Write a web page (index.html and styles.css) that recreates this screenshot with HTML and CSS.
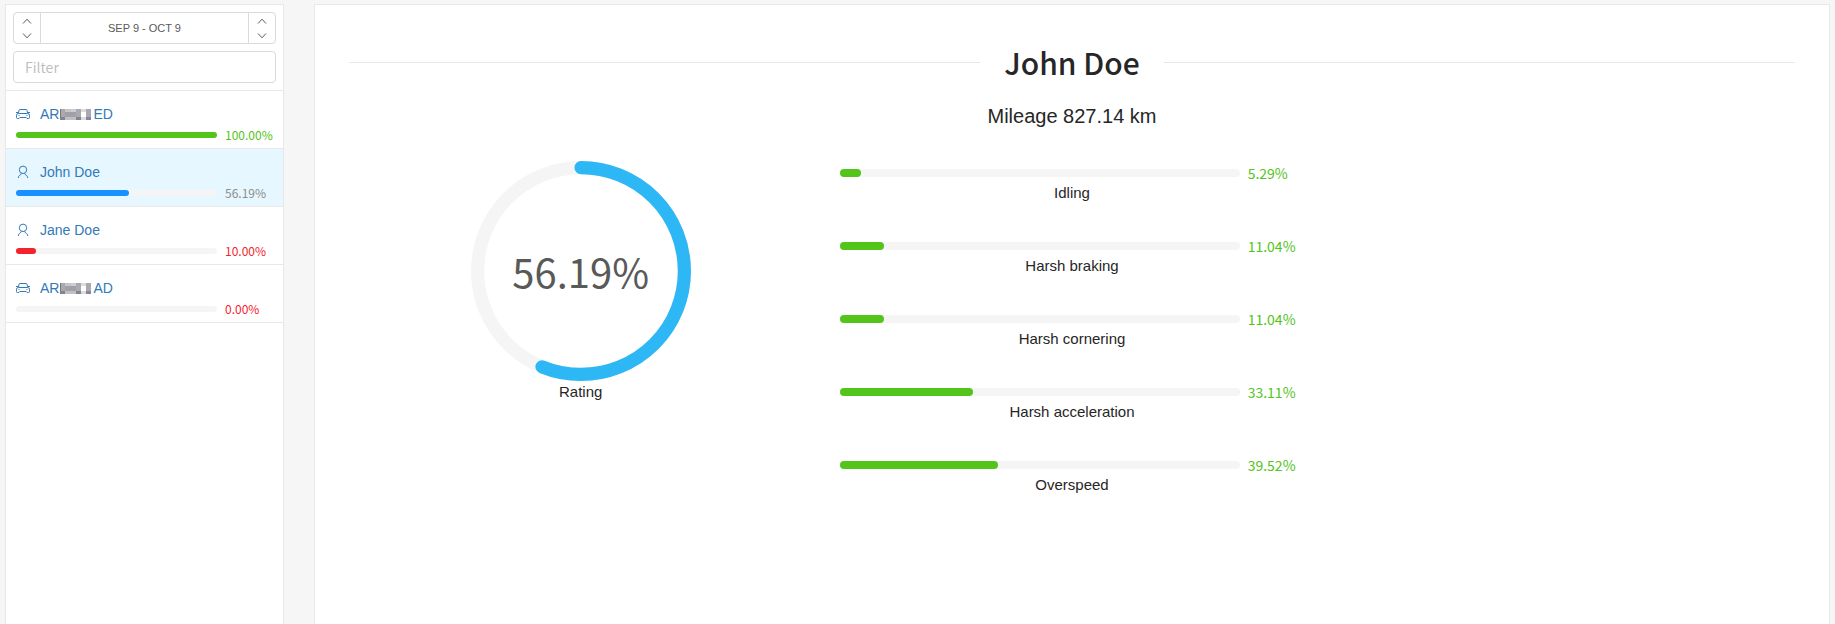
FILE: index.html
```html
<!DOCTYPE html>
<html lang="en">
<head>
<meta charset="utf-8">
<title>Driver rating</title>
<link rel="stylesheet" href="styles.css">
</head>
<body>
<svg class="defs" aria-hidden="true">
  <symbol id="car" viewBox="0 0 14 14">
    <path d="M2.500 6 3 3.200Q3.200 2.500 4 2.500h6q.8 0 1 .7L11.500 6M0 5.500h2M12 5.500h2M2.300 6.500h9.400q1.800 0 1.800 1.800v2.200q0 1-1 1h-1.500l-.8-1H3.800l-.8 1H1.500q-1 0-1-1V8.300Q.5 6.500 2.300 6.500ZM2.500 8.500h1M10.500 8.500h1"/>
  </symbol>
  <symbol id="person" viewBox="0 0 14 14">
    <circle cx="7" cy="4.800" r="3.700"/>
    <path d="M5.500 8.200Q5.300 9.600 3.500 10.400 2.500 11 2.300 13M8.500 8.200q.2 1.400 2 2.200 1 .6 1.200 2.600"/>
  </symbol>
  <symbol id="up" viewBox="0 0 10 6"><path d="M1 5.500 5 1.200 9 5.500"/></symbol>
  <symbol id="down" viewBox="0 0 10 6"><path d="M1 .5 5 4.800 9 .5"/></symbol>
  <symbol id="mosaic" viewBox="0 0 31 11">
    <path fill="#a9a9af" d="M0 0h31v11H0z"/>
    <path fill="#777" d="M0 0h1v11H0z"/>
    <path fill="#ccc4c2" d="M5 0h6v3H5z"/>
    <path fill="#c4d0dc" d="M11 0h5v3h-5z"/>
    <path fill="#a0a0a8" d="M5 3h11v5H5z"/>
    <path fill="#85838b" d="M0 8h5v3H0zM16 8h5v3h-5z"/>
    <path fill="#c0c0c6" d="M5 8h11v3H5z"/>
    <path fill="#dcdcdc" d="M21 0h5v3h-5zM21 8h5v3h-5z"/>
    <path fill="#fff" d="M21 3h5v5h-5z"/>
    <path fill="#8784a6" d="M26 8h5v3h-5z"/>
  </symbol>
</svg>
<div class="layout">
  <aside class="sidebar">
    <div class="tools">
      <div class="period">
        <div class="stepper">
          <button type="button" aria-label="Start later"><svg class="arrow"><use href="#up"/></svg></button>
          <button type="button" aria-label="Start earlier"><svg class="arrow"><use href="#down"/></svg></button>
        </div>
        <button type="button" class="range">SEP 9 - OCT 9</button>
        <div class="stepper">
          <button type="button" aria-label="End later"><svg class="arrow"><use href="#up"/></svg></button>
          <button type="button" aria-label="End earlier"><svg class="arrow"><use href="#down"/></svg></button>
        </div>
      </div>
      <input class="filter" type="text" placeholder="Filter" aria-label="Filter">
    </div>
    <ul class="list">
      <li class="item good">
        <a class="name" href="#"><svg class="icon"><use href="#car"/></svg><span>AR<svg class="mosaic"><use href="#mosaic"/></svg>ED</span></a>
        <div class="progress"><div class="track"><div class="fill" style="width:100%"></div></div><span class="value">100.00%</span></div>
      </li>
      <li class="item active">
        <a class="name" href="#"><svg class="icon"><use href="#person"/></svg><span>John Doe</span></a>
        <div class="progress"><div class="track"><div class="fill" style="width:56.19%"></div></div><span class="value">56.19%</span></div>
      </li>
      <li class="item bad">
        <a class="name" href="#"><svg class="icon"><use href="#person"/></svg><span>Jane Doe</span></a>
        <div class="progress"><div class="track"><div class="fill" style="width:10%"></div></div><span class="value">10.00%</span></div>
      </li>
      <li class="item bad">
        <a class="name" href="#"><svg class="icon"><use href="#car"/></svg><span>AR<svg class="mosaic"><use href="#mosaic"/></svg>AD</span></a>
        <div class="progress"><div class="track"><div class="fill" style="width:0%"></div></div><span class="value">0.00%</span></div>
      </li>
    </ul>
  </aside>
  <main class="panel">
    <h1 class="title">John Doe</h1>
    <p class="mileage">Mileage 827.14 km</p>
    <div class="stats">
      <section class="rating">
        <div class="dial">
          <svg viewBox="0 0 100 100" aria-hidden="true">
            <circle class="dial-track" cx="50" cy="50" r="47"/>
            <circle class="dial-fill" cx="50" cy="50" r="47" pathLength="100" stroke-dasharray="56.190 100" transform="rotate(-90 50 50)"/>
          </svg>
          <span class="dial-value">56.19%</span>
        </div>
        <p class="label">Rating</p>
      </section>
      <section class="metrics good">
        <div class="metric"><div class="progress"><div class="track"><div class="fill" style="width:5.29%"></div></div><span class="value">5.29%</span></div><p class="label">Idling</p></div>
        <div class="metric"><div class="progress"><div class="track"><div class="fill" style="width:11.04%"></div></div><span class="value">11.04%</span></div><p class="label">Harsh braking</p></div>
        <div class="metric"><div class="progress"><div class="track"><div class="fill" style="width:11.04%"></div></div><span class="value">11.04%</span></div><p class="label">Harsh cornering</p></div>
        <div class="metric"><div class="progress"><div class="track"><div class="fill" style="width:33.11%"></div></div><span class="value">33.11%</span></div><p class="label">Harsh acceleration</p></div>
        <div class="metric"><div class="progress"><div class="track"><div class="fill" style="width:39.52%"></div></div><span class="value">39.52%</span></div><p class="label">Overspeed</p></div>
      </section>
    </div>
  </main>
</div>
</body>
</html>
```
FILE: styles.css
```css
* { box-sizing: border-box; }
body {
  margin: 0;
  background: #f6f6f6;
  color: #262626;
  font-family: "Liberation Sans", Arial, sans-serif;
  font-size: 15px;
}
.defs { display: none; }
p, h1, ul { margin: 0; padding: 0; }
button { padding: 0; border: 0; background: none; color: inherit; font: inherit; }
svg { fill: none; stroke: currentColor; flex: none; }

.layout {
  display: flex;
  gap: 30px;
  min-height: 100vh;
  padding: 4px 5px 0;
}
.sidebar, .panel {
  background: #fff;
  border: 1px solid #e8e8e8;
  border-bottom: 0;
}
.sidebar { flex: 0 0 279px; }
.panel { flex: 1; min-width: 0; padding: 34px; }

.tools {
  display: grid;
  gap: 7px;
  padding: 7px;
  border-bottom: 1px solid #e8e8e8;
}
.period {
  display: flex;
  height: 32px;
  border: 1px solid #d9d9d9;
  border-radius: 4px;
  color: #595959;
}
.stepper {
  display: grid;
  grid-template-rows: 1fr 1fr;
  width: 26px;
}
.stepper button { display: grid; place-items: center; }
.arrow { width: 10px; height: 6px; }
.range {
  flex: 1;
  border: solid #d9d9d9;
  border-width: 0 1px;
  font-size: 11px;
}
.filter {
  width: 100%;
  height: 32px;
  padding: 0 11px;
  border: 1px solid #d9d9d9;
  border-radius: 4px;
  font: 14px "Noto Sans CJK SC", sans-serif;
}
.filter::placeholder { color: #bfbfbf; opacity: 1; }

.list { list-style: none; }
.item {
  display: grid;
  gap: 2px;
  padding: 13px 7px 4px 10px;
  border-bottom: 1px solid #e8e8e8;
}
.item.active { background: #e6f7ff; }
.name {
  display: flex;
  align-items: center;
  gap: 10px;
  height: 20px;
  color: #337ab7;
  font-size: 14px;
  line-height: 20px;
  text-decoration: none;
}
.icon { width: 14px; height: 14px; }
.mosaic {
  width: 31px;
  height: 11px;
  margin: 0 2px 0 1px;
  vertical-align: -1px;
  stroke: none;
}

.progress {
  display: grid;
  grid-template-columns: 1fr 51px;
  gap: 8px;
  align-items: center;
}
.track { height: 6px; border-radius: 4px; background: #f5f5f5; }
.fill { height: 100%; border-radius: 4px; background: #1890ff; }
.value {
  color: #8c8c8c;
  font-family: "Noto Sans CJK SC", sans-serif;
  font-size: 12px;
  line-height: 18px;
}
.good .fill { background: #52c41a; }
.good .value { color: #52c41a; }
.bad .fill { background: #f5222d; }
.bad .value { color: #f5222d; }

.title {
  display: flex;
  align-items: center;
  gap: 24px;
  font-family: "Noto Sans CJK SC", sans-serif;
  font-size: 30px;
  font-weight: 500;
  line-height: 46px;
}
.title::before, .title::after {
  content: "";
  flex: 1;
  border-top: 1px solid #e8e8e8;
}
.mileage {
  margin-top: 16px;
  font-size: 20px;
  line-height: 30px;
  text-align: center;
}
.stats {
  display: grid;
  grid-template-columns: repeat(3, 1fr);
  gap: 28px;
  margin-top: 30px;
}
.rating { display: grid; justify-items: center; align-content: start; }
.dial { display: grid; place-items: center; width: 220px; height: 220px; }
.dial > * { grid-area: 1 / 1; }
.dial circle { stroke-width: 6; }
.dial-track { stroke: #f5f5f5; }
.dial-fill { stroke: #2db7f5; stroke-linecap: round; }
.dial-value {
  color: #595959;
  font-family: "Noto Sans CJK SC", sans-serif;
  font-size: 40px;
  font-weight: 400;
  line-height: 40px;
}
.label { line-height: 22px; text-align: center; }
.metrics { display: grid; gap: 33px; align-content: start; padding-top: 1px; }
.metrics .label { line-height: 18px; }
.metrics .progress { grid-template-columns: 1fr 56px; }
.metrics .track { height: 8px; }
.metrics .value { font-size: 14px; line-height: 22px; }
```
